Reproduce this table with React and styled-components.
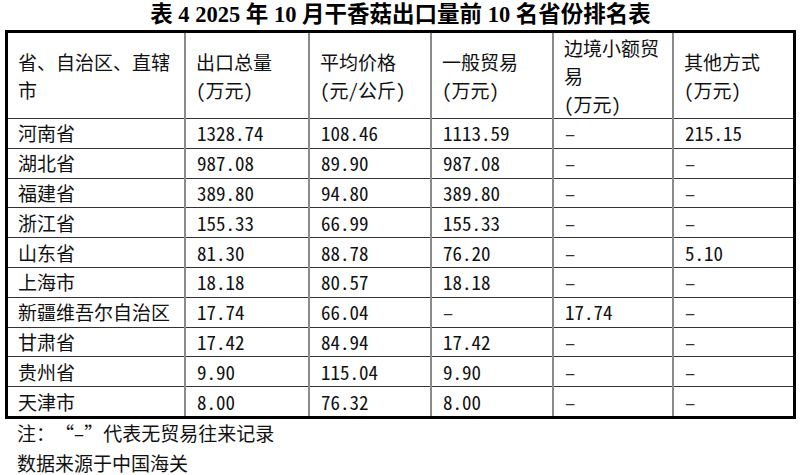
import React from "react";
import styled, { createGlobalStyle } from "styled-components";

const GlobalStyle = createGlobalStyle`
  html, body {
    margin: 0;
    padding: 0;
    background: #ffffff;
  }
  body {
    font-family: "Noto Sans CJK SC", "Noto Sans", sans-serif;
    color: #111111;
  }
`;

const Page = styled.div`
  width: 801px;
  height: 475px;
  overflow: hidden;
  box-sizing: border-box;
  padding: 0 5px;
`;

const Title = styled.h1`
  margin: 0;
  height: 30px;
  line-height: 30px;
  text-align: center;
  font-family: "Liberation Serif", "Noto Sans CJK SC", serif;
  font-size: 22.5px;
  font-weight: 700;
  color: #000000;
  white-space: nowrap;
`;

const Table = styled.table`
  width: 791px;
  border-collapse: collapse;
  table-layout: fixed;
  border: 3px solid #000000;
  font-size: 19px;
  font-feature-settings: "hwid";
`;

const HeadCell = styled.th`
  height: 85px;
  padding: 0 8px 0 10px;
  text-align: left;
  vertical-align: middle;
  font-weight: 400;
  line-height: 28px;
  border-left: 2px solid #8a8a8a;
  border-right: 2px solid #8a8a8a;
  border-bottom: 1px solid #333333;
`;

const Cell = styled.td`
  height: 28.8px;
  padding: 0 8px 0 ${({ $first }) => ($first ? "10px" : "11px")};
  line-height: 28px;
  white-space: nowrap;
  border-left: 2px solid #8a8a8a;
  border-right: 2px solid #8a8a8a;
  border-top: 1px solid #333333;
  border-bottom: 1px solid #333333;
`;

const Dash = styled.span`
  color: #333333;
`;

const Notes = styled.div`
  display: flex;
  flex-direction: column;
  gap: 6px;
  padding: 2px 0 0 12px;
  font-size: 19px;
  line-height: 24px;
  font-feature-settings: "hwid";
`;

const NoteLine = styled.p`
  margin: 0;
  white-space: nowrap;
`;

const Quote = styled.span`
  display: inline-block;
  width: 1em;
  text-align: ${({ $close }) => ($close ? "left" : "right")};
`;

const columns = [178.5, 124, 122, 122, 120, 121.5];

const headers = [
  ["省、自治区、直辖", "市"],
  ["出口总量", "(万元)"],
  ["平均价格", "(元/公斤)"],
  ["一般贸易", "(万元)"],
  ["边境小额贸", "易", "(万元)"],
  ["其他方式", "(万元)"],
];

const rows = [
  ["河南省", "1328.74", "108.46", "1113.59", "-", "215.15"],
  ["湖北省", "987.08", "89.90", "987.08", "-", "-"],
  ["福建省", "389.80", "94.80", "389.80", "-", "-"],
  ["浙江省", "155.33", "66.99", "155.33", "-", "-"],
  ["山东省", "81.30", "88.78", "76.20", "-", "5.10"],
  ["上海市", "18.18", "80.57", "18.18", "-", "-"],
  ["新疆维吾尔自治区", "17.74", "66.04", "-", "17.74", "-"],
  ["甘肃省", "17.42", "84.94", "17.42", "-", "-"],
  ["贵州省", "9.90", "115.04", "9.90", "-", "-"],
  ["天津市", "8.00", "76.32", "8.00", "-", "-"],
];

const App = () => {
  return (
    <Page>
      <GlobalStyle />
      <Title>表 4 2025 年 10 月干香菇出口量前 10 名省份排名表</Title>
      <Table>
        <colgroup>
          {columns.map((w, i) => (
            <col key={i} style={{ width: w }} />
          ))}
        </colgroup>
        <thead>
          <tr>
            {headers.map((lines, i) => (
              <HeadCell key={i}>
                {lines.map((line, j) => (
                  <React.Fragment key={j}>
                    {j > 0 && <br />}
                    {line}
                  </React.Fragment>
                ))}
              </HeadCell>
            ))}
          </tr>
        </thead>
        <tbody>
          {rows.map((row, i) => (
            <tr key={i}>
              {row.map((value, j) => (
                <Cell key={j} $first={j === 0}>
                  {value === "-" ? <Dash>–</Dash> : value}
                </Cell>
              ))}
            </tr>
          ))}
        </tbody>
      </Table>
      <Notes>
        <NoteLine>
          注：<Quote>“</Quote>–<Quote $close>”</Quote>代表无贸易往来记录
        </NoteLine>
        <NoteLine>数据来源于中国海关</NoteLine>
      </Notes>
    </Page>
  );
};

export default App;
